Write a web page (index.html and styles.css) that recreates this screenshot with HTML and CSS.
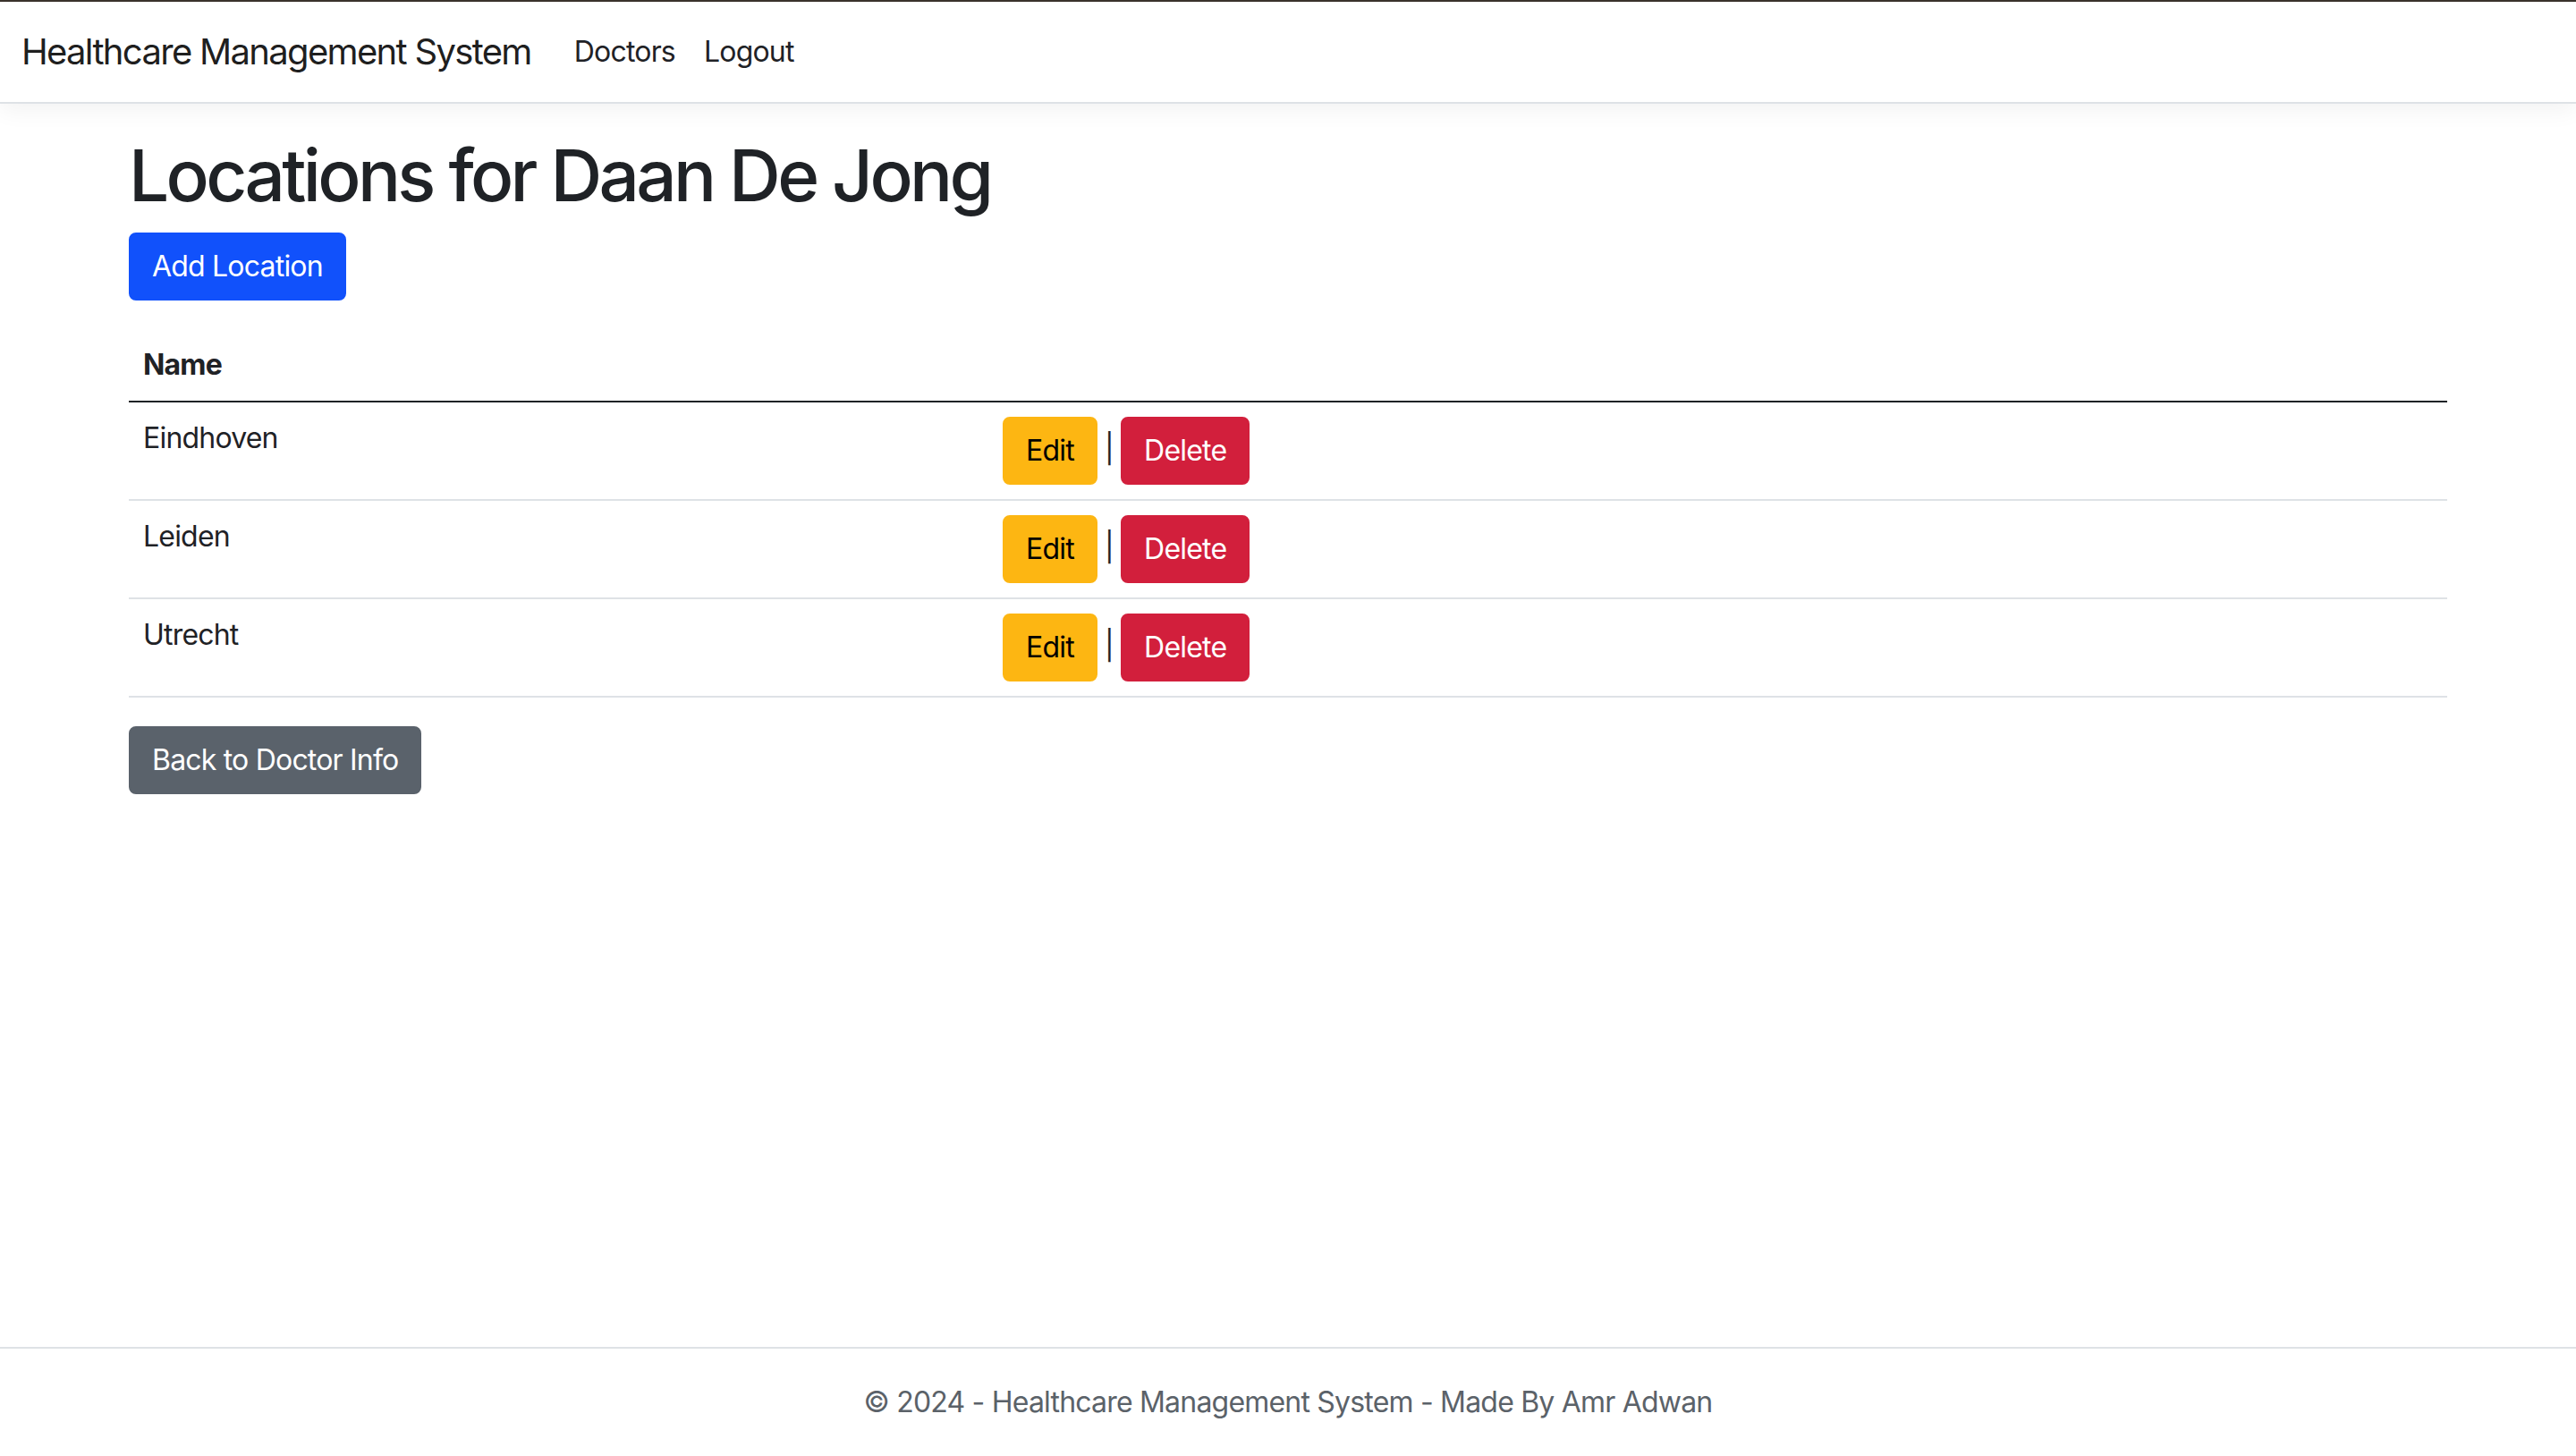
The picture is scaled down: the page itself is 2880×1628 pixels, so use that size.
FILE: index.html
```html
<!DOCTYPE html>
<html lang="en">
<head>
<meta charset="utf-8">
<title>Locations - Healthcare Management System</title>
<link rel="stylesheet" href="styles.css">
</head>
<body>
<header class="site-header">
  <nav class="navbar">
    <div class="navbar-inner">
      <a class="navbar-brand" href="#">Healthcare Management System</a>
      <ul class="nav-links">
        <li><a class="nav-link" href="#">Doctors</a></li>
        <li><a class="nav-link" href="#">Logout</a></li>
      </ul>
    </div>
  </nav>
</header>
<div class="container">
  <main class="main">
    <h1 class="page-title">Locations for Daan De Jong</h1>
    <p class="actions"><a class="btn btn-primary" href="#">Add Location</a></p>
    <table class="table">
      <colgroup><col class="col-name"><col></colgroup>
      <thead>
        <tr><th>Name</th><th></th></tr>
      </thead>
      <tbody>
        <tr>
          <td>Eindhoven</td>
          <td><a class="btn btn-warning" href="#">Edit</a> | <a class="btn btn-danger" href="#">Delete</a></td>
        </tr>
        <tr>
          <td>Leiden</td>
          <td><a class="btn btn-warning" href="#">Edit</a> | <a class="btn btn-danger" href="#">Delete</a></td>
        </tr>
        <tr>
          <td>Utrecht</td>
          <td><a class="btn btn-warning" href="#">Edit</a> | <a class="btn btn-danger" href="#">Delete</a></td>
        </tr>
      </tbody>
    </table>
    <a class="btn btn-secondary" href="#">Back to Doctor Info</a>
  </main>
</div>
<footer class="footer">
  &copy; 2024 - Healthcare Management System - Made By Amr Adwan
</footer>
</body>
</html>
```
FILE: styles.css
```css
* { box-sizing: border-box; }

html, body { margin: 0; padding: 0; }

body {
  min-height: 100vh;
  display: flex;
  flex-direction: column;
  font-family: Inter, "Noto Sans", "Liberation Sans", sans-serif;
  font-size: 32px;
  line-height: 48px;
  letter-spacing: -0.025em;
  color: #1f2226;
  background: #fff;
}

a { text-decoration: none; }

.site-header { flex: none; }

.navbar {
  background: #fff;
  border-top: 2px solid #3a322b;
  border-bottom: 2px solid #dee2e6;
  box-shadow: 0 8px 24px rgba(0, 0, 0, 0.05);
  padding: 16px 0;
  margin-bottom: 32px;
}

.navbar-inner {
  display: flex;
  align-items: center;
  padding: 0 24px;
}

.navbar-brand {
  font-size: 40px;
  line-height: 60px;
  letter-spacing: -0.042em;
  padding: 10px 0;
  margin-right: 32px;
  color: rgba(0, 0, 0, 0.9);
  white-space: nowrap;
}

.nav-links {
  display: flex;
  list-style: none;
  margin: 0;
  padding: 0;
}

.nav-link {
  display: block;
  padding: 16px 16px;
  color: #1f2226;
}

.container {
  flex: 1;
  width: 100%;
  max-width: 2640px;
  margin: 0 auto;
  padding: 0 24px;
}

.main { padding-bottom: 32px; }

.page-title {
  margin: 0 0 16px;
  font-size: 80px;
  line-height: 96px;
  font-weight: 500;
  letter-spacing: -0.046em;
}

.actions { margin: 0 0 32px; }

.btn {
  display: inline-block;
  padding: 12px 24px;
  font-size: 32px;
  line-height: 48px;
  border: 2px solid transparent;
  border-radius: 8px;
  vertical-align: middle;
  text-align: center;
  white-space: nowrap;
}

.btn-primary { background: #1151fb; border-color: #1151fb; color: #fff; }
.btn-warning { background: #fdb612; border-color: #fdb612; color: #000; }
.btn-danger { background: #d21f3c; border-color: #d21f3c; color: #fff; }
.btn-secondary { background: #5a626b; border-color: #5a626b; color: #fff; }

.table {
  width: 100%;
  table-layout: fixed;
  border-collapse: collapse;
  margin-bottom: 32px;
  vertical-align: top;
}

.col-name { width: 961px; }

.table th,
.table td {
  padding: 16px;
  text-align: left;
  border-bottom: 2px solid #dee2e6;
  vertical-align: top;
}

.table thead th {
  font-weight: 700;
  border-bottom: 2px solid #1f2226;
}

.footer {
  flex: none;
  border-top: 2px solid #dee2e6;
  line-height: 120px;
  text-align: center;
  color: #5b6269;
  white-space: nowrap;
}
```
